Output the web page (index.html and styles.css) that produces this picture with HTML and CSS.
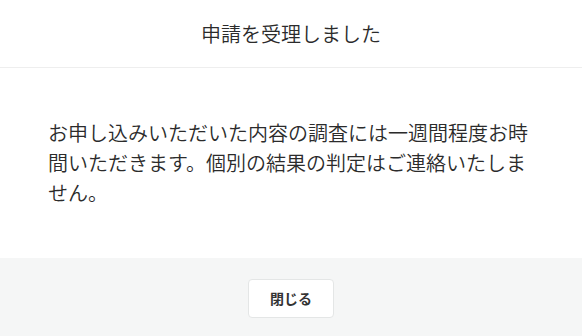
FILE: index.html
```html
<!DOCTYPE html>
<html lang="ja">
<head>
  <meta charset="utf-8">
  <title>申請を受理しました</title>
  <meta name='viewport' content='width=device-width, initial-scale=1'>
  <link rel="stylesheet" href="styles.css">
</head>
<body>
  <div class='dialog'>
    <div class='dialog-header'>
      <h1>申請を受理しました</h1>
    </div>
    <div class='dialog-body'>
      <p>お申し込みいただいた内容の調査には一週間程度お時間いただきます。個別の結果の判定はご連絡いたしません。</p>
    </div>
    <div class='dialog-footer'>
      <button class='btn-close' type='button'>閉じる</button>
    </div>
  </div>
</body>
</html>
```

FILE: styles.css
```css
body {
  margin: 0;
  font-family: "Noto Sans CJK JP", "Noto Sans", sans-serif;
  color: #333;
  background-color: #fff;
}
.dialog {
  display: flex;
  flex-direction: column;
  height: 336px;
}
.dialog-header {
  height: 67px;
  display: flex;
  align-items: center;
  justify-content: center;
  border-bottom: 1px solid #eeeeee;
}
.dialog-header h1 {
  margin: 0;
  font-size: 20px;
  font-weight: 350;
  color: #2b2b2b;
}
.dialog-body {
  padding: 50px 48px;
}
.dialog-body p {
  margin: 0;
  font-size: 20px;
  font-weight: 350;
  line-height: 30px;
  color: #2b2b2b;
}
.dialog-footer {
  flex: 1;
  background-color: #f5f6f6;
  display: flex;
  justify-content: center;
  align-items: flex-start;
  padding-top: 21px;
}
.btn-close {
  font-family: inherit;
  font-size: 14px;
  font-weight: bold;
  line-height: 21px;
  color: #333;
  background-color: #fff;
  border: 1px solid #e4e6e6;
  border-radius: 4px;
  padding: 8px 21px;
}
```
